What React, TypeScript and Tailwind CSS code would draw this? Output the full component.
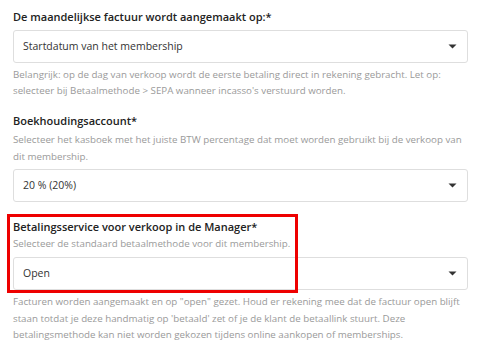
import React from 'react'

const Caret = () => (
  <svg width="9" height="5" viewBox="0 0 9 5" className="text-[#333]">
    <path d="M0.5 0.5h8L4.5 4.5z" fill="currentColor" />
  </svg>
)

const Select = ({ value }: { value: string }) => (
  <div className="flex h-[33px] items-center justify-between rounded-[3px] border border-[#dedede] bg-white pl-[9px] pr-[10px]">
    <span className="text-[10.5px] text-[#333]">{value}</span>
    <Caret />
  </div>
)

export default function App() {
  return (
    <div className="relative h-[355px] w-[480px] overflow-hidden bg-white pl-[13px] pr-[12px] pt-[9px] font-['Open_Sans',sans-serif]">
      {/* Factuur datum */}
      <div className="text-[11px] font-semibold leading-[16px] text-[#222]">
        De maandelijkse factuur wordt aangemaakt op:*
      </div>
      <div className="mt-[5px]">
        <Select value="Startdatum van het membership" />
      </div>
      <p className="mt-[4px] text-[9.75px] leading-[16px] text-[#9a9a9a]">
        Belangrijk: op de dag van verkoop wordt de eerste betaling direct in rekening gebracht. Let op:
        selecteer bij Betaalmethode &gt; SEPA wanneer incasso's verstuurd worden.
      </p>

      {/* Boekhoudingsaccount */}
      <div className="mt-[14px] text-[11px] font-semibold leading-[16px] text-[#222]">
        Boekhoudingsaccount*
      </div>
      <p className="mt-[2px] text-[9.75px] leading-[17px] text-[#9a9a9a]">
        Selecteer het kasboek met het juiste BTW percentage dat moet worden gebruikt bij de verkoop van
        dit membership.
      </p>
      <div className="mt-[4px]">
        <Select value="20 % (20%)" />
      </div>

      {/* Betalingsservice */}
      <div className="mt-[17px] text-[11px] font-semibold leading-[16px] text-[#222]">
        Betalingsservice voor verkoop in de Manager*
      </div>
      <p className="mt-[1px] text-[9.75px] leading-[16px] text-[#9a9a9a]">
        Selecteer de standaard betaalmethode voor dit membership.
      </p>
      <div className="mt-[5px]">
        <Select value="Open" />
      </div>
      <p className="mt-[4px] text-[9.75px] leading-[16.5px] text-[#9a9a9a]">
        Facturen worden aangemaakt en op "open" gezet. Houd er rekening mee dat de factuur open blijft
        staan totdat je deze handmatig op 'betaald' zet of je de klant de betaallink stuurt. Deze
        betalingsmethode kan niet worden gekozen tijdens online aankopen of memberships.
      </p>

      {/* highlight annotation */}
      <div className="pointer-events-none absolute left-[7px] top-[214px] h-[79px] w-[291px] border-[3px] border-[#ee0000]" />
    </div>
  )
}
